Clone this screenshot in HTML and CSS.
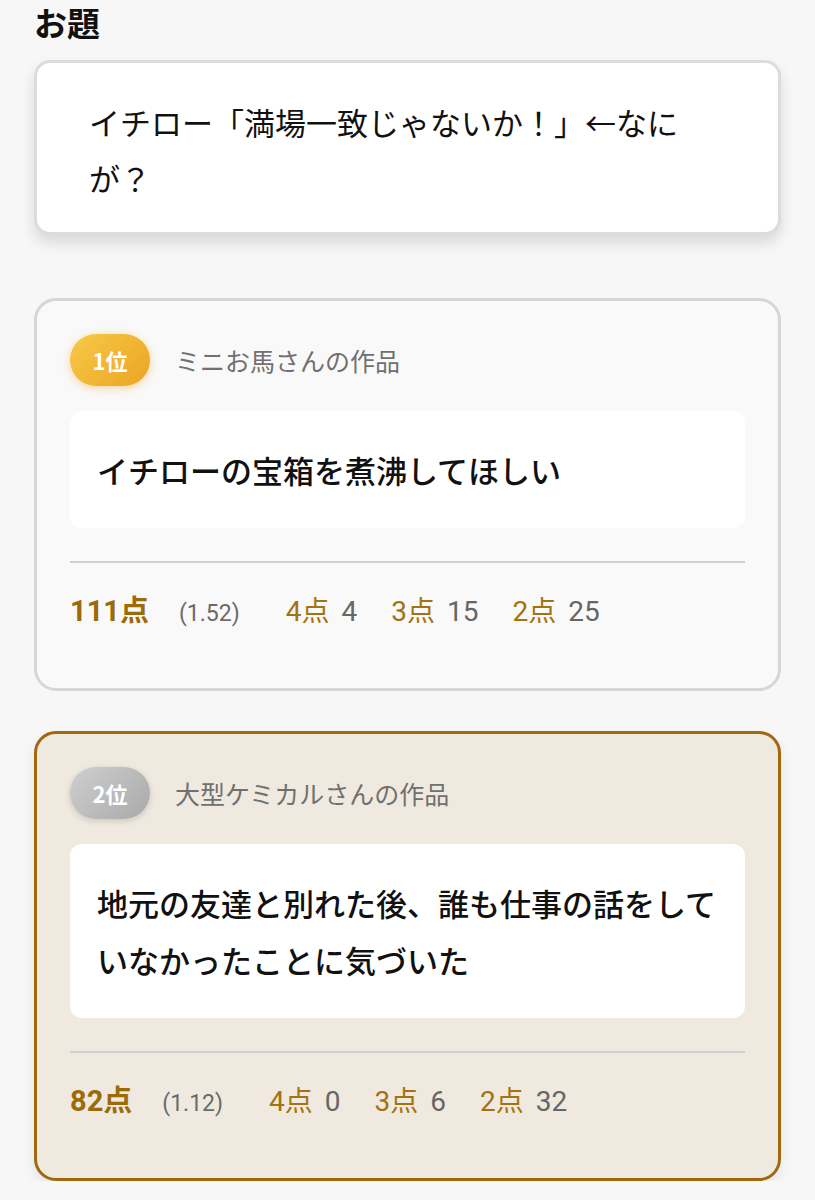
FILE: index.html
```html
<!DOCTYPE html>
<html lang="ja">
    <head>
        <meta charset="UTF-8">
        <meta name="viewport" content="width=device-width, initial-scale=1.0">
        <title>結果</title>
        <link rel="stylesheet" href="styles.css">
    </head>
    <body>
        <h2 class="sectionTitle">お題</h2>
        <div class="topicCard">
            <p class="topicText">イチロー「満場一致じゃないか！」←なにが？</p>
        </div>

        <div class="rankCard">
            <div class="rankHead">
                <span class="rankBadge gold">1位</span>
                <span class="author">ミニお馬さんの作品</span>
            </div>
            <div class="answerBox">イチローの宝箱を煮沸してほしい</div>
            <div class="scoreRow">
                <span class="total">111点</span>
                <span class="avg">(1.52)</span>
                <span class="pt">4点</span><span class="num">4</span>
                <span class="pt">3点</span><span class="num">15</span>
                <span class="pt">2点</span><span class="num">25</span>
            </div>
        </div>

        <div class="rankCard picked">
            <div class="rankHead">
                <span class="rankBadge silver">2位</span>
                <span class="author">大型ケミカルさんの作品</span>
            </div>
            <div class="answerBox">地元の友達と別れた後、誰も仕事の話をしていなかったことに気づいた</div>
            <div class="scoreRow">
                <span class="total">82点</span>
                <span class="avg">(1.12)</span>
                <span class="pt">4点</span><span class="num">0</span>
                <span class="pt">3点</span><span class="num">6</span>
                <span class="pt">2点</span><span class="num">32</span>
            </div>
        </div>
    </body>
</html>
```

FILE: styles.css
```css
body {
    margin: 0;
    padding: 0 34px;
    background: #f7f7f7;
    font-family: "Noto Sans CJK JP", "Noto Sans", sans-serif;
    color: #111;
}

.sectionTitle {
    margin: 0;
    font-size: 33px;
    line-height: 44px;
    font-weight: bold;
}

.topicCard {
    margin-top: 16px;
    background: #fff;
    border: 3px solid #dcdcdc;
    border-radius: 16px;
    box-shadow: 0 8px 14px rgba(0, 0, 0, 0.12);
    padding: 31px 52px 26px 52px;
}

.topicText {
    margin: 0;
    font-size: 31px;
    line-height: 56px;
    max-width: 610px;
}

.rankCard {
    margin-top: 63px;
    background: #f9f9f9;
    border: 3px solid #d6d6d6;
    border-radius: 22px;
    padding: 33px 33px 52px 33px;
}

.rankCard.picked {
    margin-top: 40px;
    background: #efe9df;
    border-color: #a0690e;
    box-shadow: 0 6px 14px rgba(0, 0, 0, 0.08);
}

.rankHead {
    display: flex;
    align-items: center;
    gap: 25px;
}

.rankBadge {
    display: inline-flex;
    align-items: center;
    justify-content: center;
    width: 80px;
    height: 52px;
    border-radius: 26px;
    color: #fff;
    font-size: 22px;
    font-weight: bold;
}

.rankBadge.gold {
    background: linear-gradient(135deg, #f7c948, #eda323);
    box-shadow: 0 2px 8px rgba(240, 170, 40, 0.45);
}

.rankBadge.silver {
    background: linear-gradient(135deg, #cfcfcf, #a9a9a9);
    box-shadow: 0 2px 6px rgba(0, 0, 0, 0.15);
}

.author {
    font-size: 25px;
    color: #707070;
}

.answerBox {
    margin-top: 25px;
    background: #fff;
    border-radius: 12px;
    padding: 30px 27px;
    font-size: 31px;
    line-height: 57px;
    font-weight: 500;
    color: #111;
}

.scoreRow {
    margin-top: 33px;
    border-top: 2px solid #cfcfcf;
    padding-top: 26px;
    display: flex;
    align-items: baseline;
    font-family: Roboto, "Noto Sans CJK JP", sans-serif;
    font-size: 28px;
    line-height: 44px;
}

.total {
    font-size: 29px;
    font-weight: bold;
    color: #9c6a08;
    margin-right: 30px;
}

.avg {
    font-size: 23px;
    color: #6a6a6a;
    margin-right: 46px;
}

.pt {
    color: #a47210;
    margin-right: 12px;
}

.num {
    color: #666;
    margin-right: 34px;
}
```
